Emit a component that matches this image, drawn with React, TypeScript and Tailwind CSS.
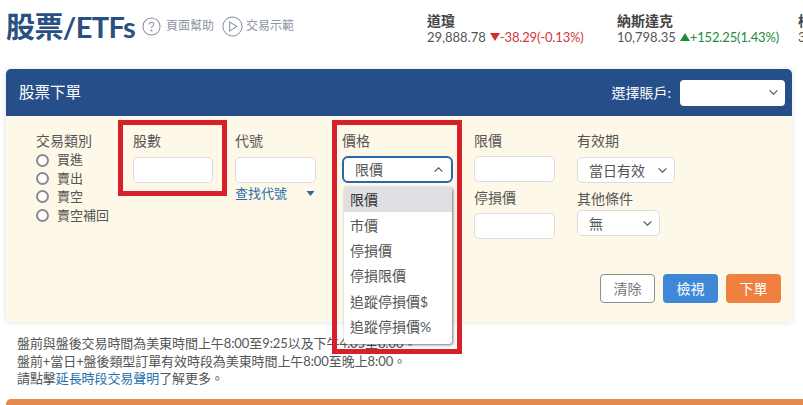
import React from "react";

const cjk = "font-['Lato','Noto_Sans_CJK_TC',sans-serif]";

const Chevron = ({ up = false, className = "" }: { up?: boolean; className?: string }) => (
  <svg viewBox="0 0 12 8" className={className} fill="none" stroke="#555" strokeWidth={1.3}>
    <path d={up ? "M1.5 6.5 6 2l4.5 4.5" : "M1.5 1.5 6 6l4.5-4.5"} />
  </svg>
);

const Ticker = ({
  name,
  value,
  change,
  up,
  className,
}: {
  name: string;
  value: string;
  change: string;
  up: boolean;
  className: string;
}) => (
  <div className={"shrink-0 " + className}>
    <div className="text-[14px] leading-[17px] font-bold text-[#444]">{name}</div>
    <div className="flex items-center text-[13px] leading-[16px] text-[#555] whitespace-nowrap">
      {value}
      {up ? (
        <svg viewBox="0 0 10 8" className="w-[10px] h-[8px] ml-[4px]">
          <path d="M5 0 10 8H0z" fill="#1e8a3c" />
        </svg>
      ) : (
        <svg viewBox="0 0 10 8" className="w-[10px] h-[8px] ml-[4px]">
          <path d="M0 0h10L5 8z" fill="#d32f2f" />
        </svg>
      )}
      <span className={(up ? "text-[#1e8a3c]" : "text-[#cf3a3a]") + " tracking-[-0.15px]"}>{change}</span>
    </div>
  </div>
);

const Radio = ({ label }: { label: string }) => (
  <label className="flex items-center h-[18.4px] text-[13px] text-[#555]">
    <span className="w-[13px] h-[13px] rounded-full border-2 border-[#8a8a8a] bg-white mr-[8px]" />
    {label}
  </label>
);

const TextInput = ({ className = "" }: { className?: string }) => (
  <div className={"h-[26px] bg-white border border-[#dcdcdc] rounded-[5px] " + className} />
);

const Select = ({ label, className }: { label: string; className: string }) => (
  <div
    className={
      "h-[26px] bg-white border border-[#dcdcdc] rounded-[5px] flex items-center justify-between pl-[11px] pr-[6px] text-[14px] text-[#555] " +
      className
    }
  >
    {label}
    <Chevron className="w-[11px] h-[7px]" />
  </div>
);

const priceOptions = ["限價", "市價", "停損價", "停損限價", "追蹤停損價$", "追蹤停損價%"];

export default function App() {
  return (
    <div className={"relative w-[803px] h-[405px] overflow-hidden bg-white " + cjk}>
      {/* page heading */}
      <div className="flex h-[69px] pl-[6px]">
        <h1 className="text-[29px] w-[136px] shrink-0 leading-[53px] font-bold text-[#2a5082] whitespace-nowrap tracking-[-0.6px]">
          股票/ETFs
        </h1>
        <div className="flex items-center h-[52px] text-[12px] text-[#8a94a3] w-[285px] shrink-0">
          <svg viewBox="0 0 20 20" className="w-[19px] h-[19px]" fill="none" stroke="#8a94a3" strokeWidth={1.1}>
            <circle cx="10" cy="10" r="9" />
            <path d="M7.6 8c0-1.5 1.1-2.4 2.5-2.4s2.4.9 2.4 2.1c0 1.9-2.5 1.9-2.5 3.9" />
            <circle cx="10" cy="14.2" r=".6" fill="#8a94a3" />
          </svg>
          <span className="ml-[5px]">頁面幫助</span>
          <svg viewBox="0 0 22 22" className="w-[21px] h-[21px] ml-[8px]" fill="none" stroke="#8a94a3" strokeWidth={1.1}>
            <circle cx="11" cy="11" r="10" />
            <path d="M8 6.2 15.5 11 8 15.8z" />
          </svg>
          <span className="ml-[3px]">交易示範</span>
        </div>
        <div className="flex pt-[12px]">
          <Ticker name="道瓊" value="29,888.78" change="-38.29(-0.13%)" up={false} className="w-[190px]" />
          <Ticker name="納斯達克" value="10,798.35" change="+152.25(1.43%)" up className="w-[181px]" />
          <Ticker name="標普500" value="3,600.00" change="" up className="w-[100px]" />
        </div>
      </div>

      {/* order card */}
      <div className="ml-[6px] w-[786px] h-[253px] rounded-t-[5px] shadow-[0_0_6px_rgba(0,0,0,0.12)]">
        <div className="h-[47px] bg-[#264f8a] rounded-t-[5px] flex items-center pl-[13px] pr-[7px] text-white">
          <span className="text-[15.5px] flex-1">股票下單</span>
          <span className="text-[14px] mr-[9px]">選擇賬戶:</span>
          <div className="w-[105px] h-[26px] bg-white rounded-[4px] flex items-center justify-end pr-[3px]">
            <Chevron className="w-[11px] h-[7px] mr-[3px]" />
          </div>
        </div>
        <div className="h-[206px] bg-[#fef8e9] flex items-start pt-[16px] text-[14px] text-[#555]">
          <div className="w-[127px] pl-[30px] shrink-0">
            <div className="leading-[18px] pb-[1px]">交易類別</div>
            <Radio label="買進" />
            <Radio label="賣出" />
            <Radio label="賣空" />
            <Radio label="賣空補回" />
          </div>
          <div className="w-[102px] shrink-0">
            <div className="leading-[18px] mb-[7px]">股數</div>
            <TextInput className="w-[80px]" />
          </div>
          <div className="w-[107px] shrink-0">
            <div className="leading-[18px] mb-[7px]">代號</div>
            <TextInput className="w-[81px]" />
            <div className="flex items-center w-[81px] justify-between mt-[1px] text-[13px] leading-[18px] text-[#1f6fa8]">
              查找代號
              <svg viewBox="0 0 8 5" className="w-[9px] h-[5px] mr-[1px]">
                <path d="M0 0h8L4 5z" fill="#1f6fa8" />
              </svg>
            </div>
          </div>
          <div className="w-[132px] shrink-0">
            <div className="leading-[18px] mb-[6px]">價格</div>
            <div className="w-[111px] h-[27px] bg-white border-2 border-[#2a67ad] rounded-[6px] flex items-center justify-between pl-[11px] pr-[7px]">
              限價
              <Chevron up className="w-[11px] h-[7px]" />
            </div>
          </div>
          <div className="w-[103px] shrink-0">
            <div className="leading-[18px] mb-[6px]">限價</div>
            <TextInput className="w-[81px]" />
            <div className="leading-[18px] mt-[7px] mb-[6px]">停損價</div>
            <TextInput className="w-[81px]" />
          </div>
          <div className="shrink-0">
            <div className="leading-[18px] mb-[7px]">有效期</div>
            <Select label="當日有效" className="w-[98px]" />
            <div className="leading-[18px] mt-[7px] mb-[2px]">其他條件</div>
            <Select label="無" className="w-[83px]" />
          </div>
        </div>
      </div>

      {/* action buttons sit at the bottom right of the form */}
      <div className="absolute left-[600px] top-[274px] flex gap-[8px] text-[14px]">
        <button className="w-[55px] h-[29px] bg-white border border-[#8f8f8f] rounded-[4px] text-[#777]">清除</button>
        <button className="w-[55px] h-[29px] bg-[#3f88d8] rounded-[4px] text-white">檢視</button>
        <button className="w-[55px] h-[29px] bg-[#f08040] rounded-[4px] text-white">下單</button>
      </div>

      {/* notes */}
      <div className="pl-[17px] pt-[13px] text-[13px] leading-[17.5px] tracking-[-0.08px] text-[#555] whitespace-nowrap">
        <div>盤前與盤後交易時間為美東時間上午8:00至9:25以及下午4:05至8:00。</div>
        <div>盤前+當日+盤後類型訂單有效時段為美東時間上午8:00至晚上8:00。</div>
        <div>
          請點擊<span className="text-[#1f6fa8]">延長時段交易聲明</span>了解更多。
        </div>
      </div>

      <div className="absolute left-[6px] right-0 top-[399px] h-[10px] bg-[#e38a50] rounded-tl-[5px]" />

      {/* red annotation frames */}
      <div className="absolute left-[118px] top-[120px] w-[109px] h-[76px] border-[5px] border-[#d8202a]" />
      <div className="absolute left-[332px] top-[120px] w-[130px] h-[234px] border-[5px] border-[#d8202a]" />

      {/* open price dropdown */}
      <div className="absolute left-[344px] top-[187px] w-[108px] h-[157px] bg-white rounded-[3px] shadow-[1px_1px_3px_rgba(0,0,0,0.55)] text-[14px] text-[#555]">
        {priceOptions.map((o, i) => (
          <div
            key={o}
            className={"h-[25.4px] flex items-center pl-[6px] " + (i === 0 ? "bg-[#e0e0e4] text-[#333]" : "")}
          >
            {o}
          </div>
        ))}
      </div>
    </div>
  );
}
